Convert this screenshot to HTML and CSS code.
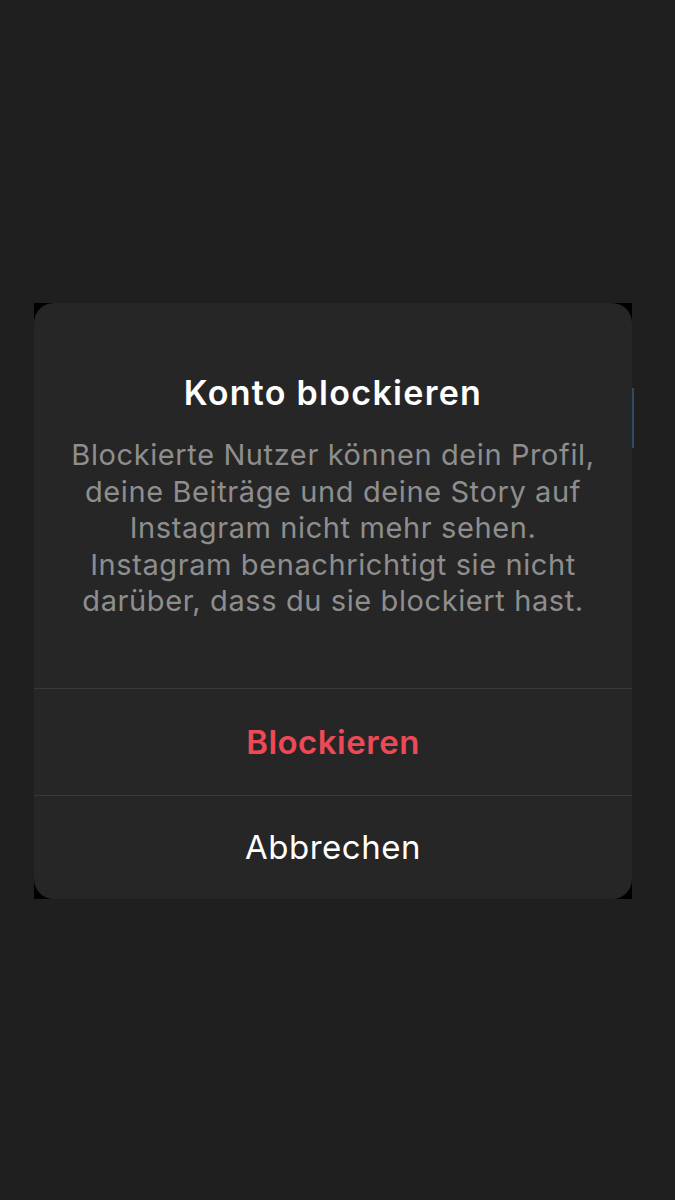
FILE: index.html
```html
<!DOCTYPE html>
<html lang="de">
<head>
    <meta charset="UTF-8">
    <meta name="viewport" content="width=device-width, initial-scale=1.0">
    <title>Konto blockieren</title>
    <link rel="stylesheet" href="styles.css">
</head>
<body>
    <div class="screen">
        <div class="backdrop">
            <div class="dialog">
                <div class="dialog-body">
                    <h1 class="dialog-title">Konto blockieren</h1>
                    <p class="dialog-text">Blockierte Nutzer können dein Profil,<br>deine Beiträge und deine Story auf<br>Instagram nicht mehr sehen.<br>Instagram benachrichtigt sie nicht<br>darüber, dass du sie blockiert hast.</p>
                </div>
                <button class="dialog-btn danger">Blockieren</button>
                <button class="dialog-btn last">Abbrechen</button>
            </div>
            <span class="edge-mark"></span>
        </div>
    </div>
</body>
</html>
```

FILE: styles.css
```css
/* Page */
body {
    margin: 0;
    background-color: #1f1f1f;
    font-family: Inter, "Liberation Sans", Arial, sans-serif;
    color: #fff;
}

.screen {
    height: 1200px;
    padding-top: 303px;
    box-sizing: border-box;
}

/* Black sheet behind the dialog */
.backdrop {
    position: relative;
    margin-left: 34px;
    width: 598px;
    background-color: #000;
}

.edge-mark {
    position: absolute;
    right: -2px;
    top: 85px;
    width: 2px;
    height: 60px;
    background-color: #2d4a66;
}

/* Dialog */
.dialog {
    display: flex;
    flex-direction: column;
    background-color: #262626;
    border-radius: 20px;
    overflow: hidden;
}

.dialog-body {
    padding: 68px 10px 68px;
    text-align: center;
}

.dialog-title {
    margin: 0 0 22px;
    font-size: 34px;
    font-weight: 600;
    line-height: 44px;
    letter-spacing: 1.3px;
}

.dialog-text {
    margin: 0;
    font-size: 29px;
    line-height: 36.5px;
    letter-spacing: 0.6px;
    color: #8e8e8e;
    white-space: nowrap;
}

.dialog-btn {
    height: 107px;
    border: none;
    border-top: 1px solid #3a3a3a;
    background: transparent;
    color: #fff;
    font-family: inherit;
    font-size: 33px;
    letter-spacing: 0.5px;
    padding: 0;
}

.dialog-btn.last {
    height: 104px;
}

.dialog-btn.danger {
    color: #ed4956;
    font-weight: 600;
}
```
